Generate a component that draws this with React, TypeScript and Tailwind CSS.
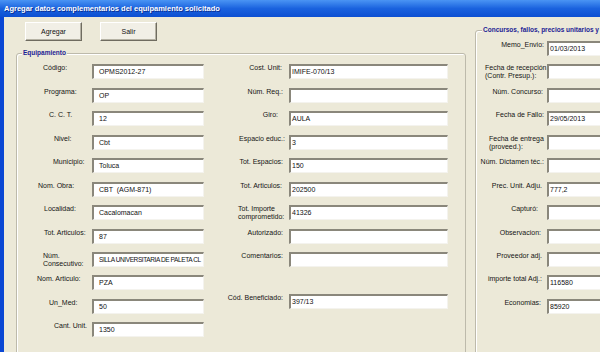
type Row = { label: string[]; value: string; pad: string; tight?: boolean };

const LEFT: Row[] = [
  { label: ["Código:"], value: "OPMS2012-27", pad: "pl-[26px]" },
  { label: ["Programa:"], value: "OP", pad: "pl-[27px]" },
  { label: ["C. C. T."], value: "12", pad: "pl-[32px]" },
  { label: ["Nivel:"], value: "Cbt", pad: "pl-[37px]" },
  { label: ["Municipio:"], value: "Toluca", pad: "pl-[36px]" },
  { label: ["Nom. Obra:"], value: "CBT  (AGM-871)", pad: "pl-[21px]" },
  { label: ["Localidad:"], value: "Cacalomacan", pad: "pl-[27px]" },
  { label: ["Tot. Articulos:"], value: "87", pad: "pl-[27px]" },
  { label: ["Núm.", "Consecutivo:"], value: "SILLA UNIVERSITARIA DE PALETA CL", pad: "pl-[26px]", tight: true },
  { label: ["Nom. Articulo:"], value: "PZA", pad: "pl-[20px]" },
  { label: ["Un_Med:"], value: "50", pad: "pl-[32px]" },
  { label: ["Cant. Unit."], value: "1350", pad: "pl-[37px]" },
];

const MIDDLE: Row[] = [
  { label: ["Cost. Unit:"], value: "IMIFE-070/13", pad: "text-right pr-[7px]" },
  { label: ["Núm. Req.:"], value: "", pad: "text-right pr-[6px]" },
  { label: ["Giro:"], value: "AULA", pad: "text-right pr-[11px]" },
  { label: ["Espacio educ.:"], value: "3", pad: "text-right pr-[4px]" },
  { label: ["Tot. Espacios:"], value: "150", pad: "text-right pr-[6px]" },
  { label: ["Tot. Articulos:"], value: "202500", pad: "text-right pr-[7px]" },
  { label: ["Tot. Importe", "comprometido:"], value: "41326", pad: "pl-[34px]" },
  { label: ["Autorizado:"], value: "", pad: "text-right pr-[6px]" },
  { label: ["Comentarios:"], value: "", pad: "text-right pr-[6px]" },
];

const RIGHT: Row[] = [
  { label: ["Memo_Envio:"], value: "01/03/2013", pad: "text-right pr-[3px]" },
  { label: ["Fecha de recepción", "(Contr. Presup.):"], value: "", pad: "pl-[9px]" },
  { label: ["Núm. Concurso:"], value: "", pad: "text-right pr-[4px]" },
  { label: ["Fecha de Fallo:"], value: "29/05/2013", pad: "text-right pr-[3px]" },
  { label: ["Fecha de entrega", "(proveed.):"], value: "", pad: "pl-[13px]" },
  { label: ["Núm. Dictamen téc.:"], value: "", pad: "text-right pr-[3px]" },
  { label: ["Prec. Unit. Adju."], value: "777,2", pad: "text-right pr-[5px]" },
  { label: ["Capturó:"], value: "", pad: "text-right pr-[9px]" },
  { label: ["Observacion:"], value: "", pad: "text-right pr-[6px]" },
  { label: ["Proveedor adj."], value: "", pad: "text-right pr-[5px]" },
  { label: ["importe total Adj.:"], value: "116580", pad: "text-right pr-[5px]" },
  { label: ["Economias:"], value: "85920", pad: "text-right pr-[6px]" },
];

function Field({ row, labelW, boxW, inset }: { row: Row; labelW: string; boxW: string; inset: string }) {
  return (
    <div className="h-[23.45px] flex items-start shrink-0">
      <div className={`${labelW} shrink-0 text-[7px] leading-[8px] text-[#141414] whitespace-nowrap ${row.pad}`}>
        {row.label.map((l) => (
          <div key={l}>{l}</div>
        ))}
      </div>
      <div
        className={`${boxW} ${inset} ${row.tight ? "text-[6.5px] tracking-[-0.4px]" : "text-[7px]"} h-[15px] shrink-0 bg-white border-t-2 border-l-2 border-b border-r border-t-[#8a877b] border-l-[#8a877b] border-b-[#f4f3ee] border-r-[#f4f3ee] leading-[12px] text-[#111] whitespace-pre overflow-hidden`}
      >
        {row.value}
      </div>
    </div>
  );
}

function WinButton({ children }: { children: string }) {
  return (
    <button className="w-[57px] h-[19px] bg-[#f1efe6] border-t border-l border-white border-r border-b border-r-[#6f6c60] border-b-[#6f6c60] shadow-[inset_-1px_-1px_0_#b5b2a4] text-[7px] leading-[17px] text-[#111] text-center">
      {children}
    </button>
  );
}

export default function App() {
  return (
    <div className="w-[600px] h-[352px] overflow-hidden bg-[#ECE9D8] flex flex-col font-['Liberation_Sans',Arial,sans-serif]">
      {/* Title bar */}
      <div className="h-[17px] shrink-0 bg-gradient-to-b from-[#4a94f4] via-[#1a62de] to-[#0c4fd2] flex items-center pl-[4px] text-white font-bold text-[7.5px] [text-shadow:1px_1px_0_#0b2f94]">
        Agregar datos complementarios del equipamiento solicitado
      </div>

      <div className="h-[360px] shrink-0 flex border-l-4 border-l-[#0a47d4]">
        {/* Left area: buttons + Equipamiento */}
        <div className="w-[462px] shrink-0 flex flex-col pl-[12px]">
          <div className="flex gap-[18px] pl-[9px] pt-[5px]">
            <WinButton>Agregar</WinButton>
            <WinButton>Salir</WinButton>
          </div>

          <fieldset className="mt-[8px] w-[450px] h-[320px] border border-[#bdbaab] rounded-[3px] shadow-[inset_1px_1px_0_#ffffff]">
            <legend className="ml-[5px] px-[1px] bg-[#ECE9D8] text-[6.5px] leading-[8px] font-bold text-[#1c1c94]">
              Equipamiento
            </legend>
            <div className="flex pt-[7.45px]">
              <div className="flex flex-col">
                {LEFT.map((r) => (
                  <Field key={r.label.join()} row={r} labelW="w-[75px]" boxW="w-[112px]" inset="pl-[5px]" />
                ))}
              </div>
              <div className="flex flex-col">
                {MIDDLE.map((r) => (
                  <Field key={r.label.join()} row={r} labelW="w-[85px]" boxW="w-[159px]" inset="pl-[1px]" />
                ))}
                <div className="mt-[18.5px]">
                  <Field
                    row={{ label: ["Cód. Beneficiado:"], value: "397/13", pad: "text-right pr-[6px]" }}
                    labelW="w-[85px]"
                    boxW="w-[159px]"
                    inset="pl-[1px]"
                  />
                </div>
              </div>
            </div>
          </fieldset>
        </div>

        {/* Right area: Concursos */}
        <fieldset className="ml-[9px] mt-[9px] w-[200px] h-[340px] shrink-0 border border-[#bdbaab] rounded-[3px] shadow-[inset_1px_1px_0_#ffffff]">
          <legend className="ml-[6px] px-[1px] bg-[#ECE9D8] text-[6.5px] leading-[8px] font-bold text-[#1c1c94] whitespace-nowrap">
            Concursos, fallos, precios unitarios y
          </legend>
          <div className="flex flex-col pt-[7px]">
            {RIGHT.map((r) => (
              <Field key={r.label.join()} row={r} labelW="w-[71px]" boxW="w-[120px]" inset="pl-[1px]" />
            ))}
          </div>
        </fieldset>
      </div>
    </div>
  );
}
